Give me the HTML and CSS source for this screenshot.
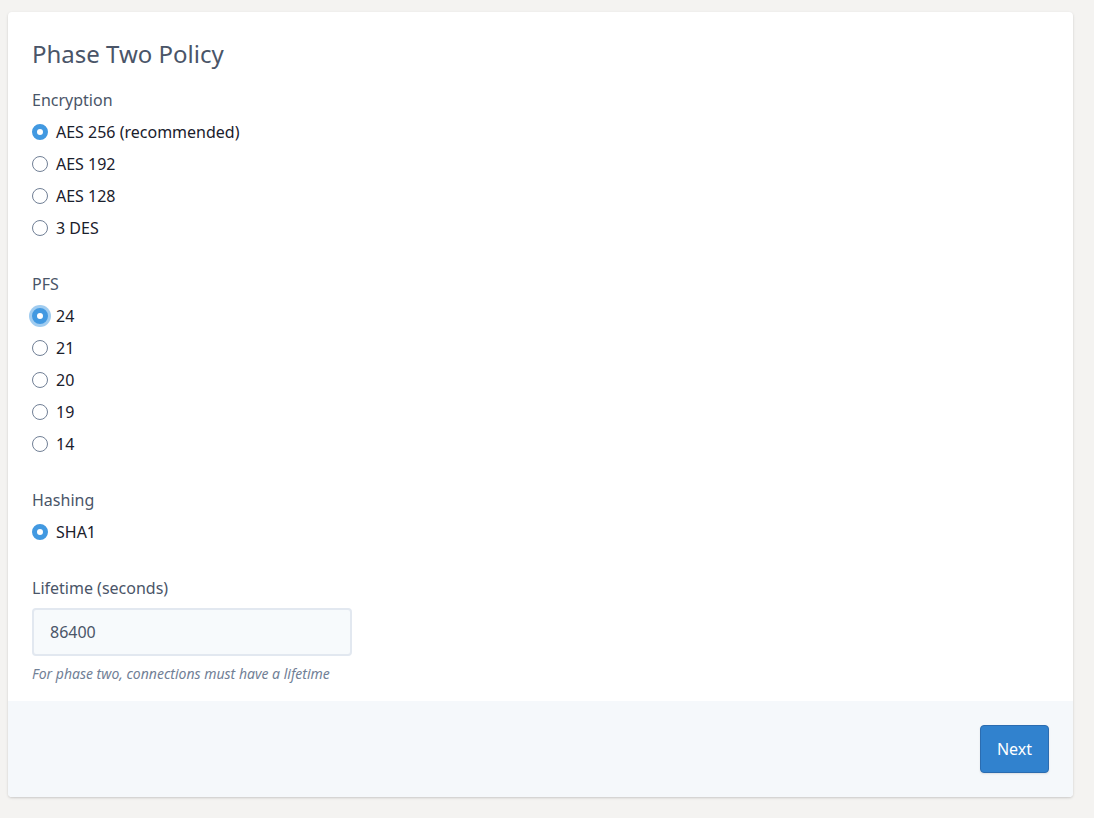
FILE: index.html
```html
<!DOCTYPE html>
<html>
<head>
<meta charset="utf-8">
<link rel="stylesheet" href="styles.css">
</head>
<body>
<div class="card">
  <div class="card-body">
    <h2 class="title">Phase Two Policy</h2>

    <div class="group">
      <div class="label">Encryption</div>
      <div class="options">
        <label class="option"><input type="radio" name="enc" checked><span>AES 256 (recommended)</span></label>
        <label class="option"><input type="radio" name="enc"><span>AES 192</span></label>
        <label class="option"><input type="radio" name="enc"><span>AES 128</span></label>
        <label class="option"><input type="radio" name="enc"><span>3 DES</span></label>
      </div>
    </div>

    <div class="group">
      <div class="label">PFS</div>
      <div class="options">
        <label class="option"><input type="radio" name="pfs" class="focused" checked><span>24</span></label>
        <label class="option"><input type="radio" name="pfs"><span>21</span></label>
        <label class="option"><input type="radio" name="pfs"><span>20</span></label>
        <label class="option"><input type="radio" name="pfs"><span>19</span></label>
        <label class="option"><input type="radio" name="pfs"><span>14</span></label>
      </div>
    </div>

    <div class="group">
      <div class="label">Hashing</div>
      <div class="options">
        <label class="option"><input type="radio" name="hash" checked><span>SHA1</span></label>
      </div>
    </div>

    <div class="group last">
      <div class="label">Lifetime (seconds)</div>
      <input class="text-input" type="text" value="86400">
      <div class="help">For phase two, connections must have a lifetime</div>
    </div>
  </div>
  <div class="card-footer">
    <button class="btn">Next</button>
  </div>
</div>
</body>
</html>
```

FILE: styles.css
```css
html, body {
  margin: 0;
  padding: 0;
}
body {
  background: #f4f3f1;
  font-family: "Noto Sans", "Open Sans", sans-serif;
  padding: 12px 21px 21px 8px;
}
.card {
  background: #ffffff;
  border-radius: 4px;
  box-shadow: 0 1px 3px rgba(0, 0, 0, 0.12), 0 1px 2px rgba(0, 0, 0, 0.06);
  overflow: hidden;
}
.card-body {
  padding: 26px 24px 17px 24px;
}
.title {
  margin: 0 0 18px 0;
  font-size: 24px;
  line-height: 32px;
  font-weight: 400;
  color: #4a5568;
}
.group {
  margin-bottom: 32px;
}
.group.last {
  margin-bottom: 0;
}
.label {
  font-size: 16px;
  line-height: 24px;
  color: #4a5568;
  margin-bottom: 8px;
}
.options {
  display: flex;
  flex-direction: column;
  gap: 8px;
}
.option {
  display: flex;
  align-items: center;
  gap: 8px;
  height: 24px;
  font-size: 16px;
  color: #1a202c;
}
.option input {
  appearance: none;
  -webkit-appearance: none;
  margin: 0;
  width: 16px;
  height: 16px;
  border-radius: 50%;
  border: 1px solid #718096;
  background: #ffffff;
  box-sizing: border-box;
  flex: none;
}
.option input:checked {
  border: 5px solid #4299e1;
  background: #ffffff;
}
.option input.focused {
  box-shadow: 0 0 0 3px rgba(66, 153, 225, 0.5);
}
.text-input {
  display: block;
  box-sizing: border-box;
  width: 320px;
  height: 48px;
  margin: 0;
  padding: 0 16px;
  font-family: "Noto Sans", "Open Sans", sans-serif;
  font-size: 16px;
  color: #4a5568;
  background: #f7fafc;
  border: 2px solid #e2e8f0;
  border-radius: 4px;
  outline: none;
}
.help {
  margin-top: 8px;
  font-size: 14px;
  line-height: 20px;
  font-style: italic;
  color: #718096;
}
.card-footer {
  background: #f5f8fb;
  padding: 24px;
  display: flex;
  justify-content: flex-end;
}
.btn {
  height: 48px;
  padding: 0 16px;
  font-family: "Noto Sans", "Open Sans", sans-serif;
  font-size: 16px;
  color: #ffffff;
  background: #3182ce;
  border: 1px solid #2b6cb0;
  border-radius: 4px;
  box-shadow: 0 1px 2px rgba(0, 0, 0, 0.1);
}
```
